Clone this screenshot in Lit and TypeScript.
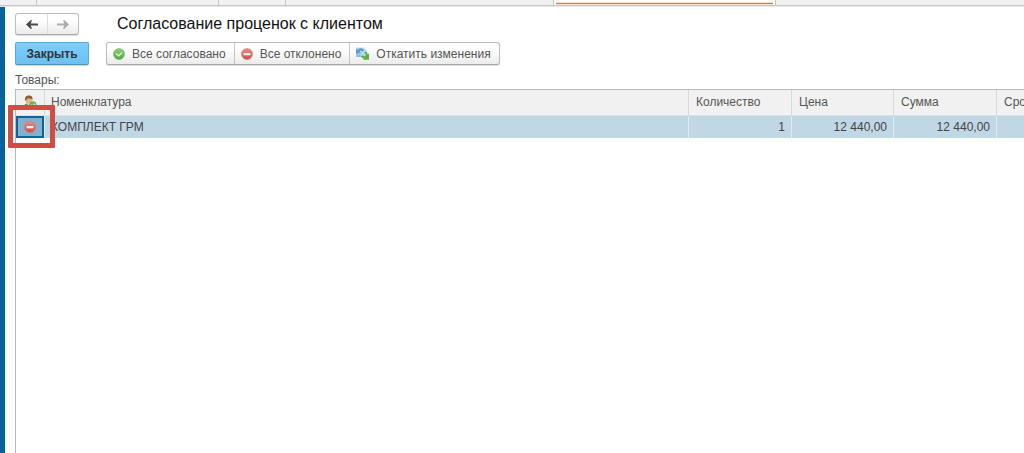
import { LitElement, html, css, svg } from "lit";
import { customElement, state } from "lit/decorators.js";

interface Item {
  name: string;
  quantity: string;
  price: string;
  sum: string;
  term: string;
}

const approvedIcon = html`<svg class="icon" width="12" height="12" viewBox="0 0 12 12" aria-hidden="true">
  <defs><linearGradient id="g" x1="0" y1="0" x2="0" y2="1"><stop offset="0" stop-color="#8fcf78" /><stop offset="1" stop-color="#55a843" /></linearGradient></defs>
  <circle cx="6" cy="6" r="5.5" fill="url(#g)" stroke="#6fb55c" stroke-width=".6" />
  <path d="M3 5.600 5.600 7.800 9 4.800" fill="none" stroke="#e4f5dd" stroke-width="1.3" />
</svg>`;

const rejectedIcon = html`<svg class="icon" width="12" height="12" viewBox="0 0 12 12" aria-hidden="true">
  <defs><linearGradient id="r" x1="0" y1="0" x2="0" y2="1"><stop offset="0" stop-color="#ea8b84" /><stop offset="1" stop-color="#d04a45" /></linearGradient></defs>
  <circle cx="6" cy="6" r="5.5" fill="url(#r)" stroke="#d9766f" stroke-width=".6" />
  <rect x="2.6" y="4.9" width="6.8" height="2.4" rx=".4" fill="#fff5f3" />
</svg>`;

const revertIcon = html`<svg class="icon" width="13" height="13" viewBox="0 0 13 13" aria-hidden="true">
  <path d="M0 .5h7.500l2.500 2.500V10H0z" fill="#b4d6ec" />
  <path d="M0 1.500 1.600 3C3.400.400 6.600.600 8 3.200L6.200 4.400C5.400 3.200 4.400 3.200 3.600 4.400L5 5.800 0 7z" fill="#5b9dce" />
  <path d="M.5 7.500h4V10h-4z" fill="#86bbdd" />
  <path d="M13 6.500v6.300H6.800L8.200 11.400C6.600 11.600 5.400 10.600 5 9.200L7 8.400C7.800 9.800 9.400 9.600 9.800 8.200 10 7.200 9.400 6.400 8.600 6L9.600 4.200C10.800 4.800 11.600 6 11.600 7.600z" fill="#5cb045" />
</svg>`;

const personIcon = html`<svg class="icon" width="14" height="14" viewBox="0 0 14 14" aria-hidden="true">
  <path d="M.5 12.500C.500 9.600 2.600 8.200 5.600 8.200s5 1.200 5 4.300z" fill="#5c9a62" />
  <path d="M4 8h3.200L5.600 10.800z" fill="#f2ead8" />
  <ellipse cx="5.800" cy="5.200" rx="3.100" ry="3.600" fill="#e8b383" />
  <path d="M2.200 5.600C1.400 1.800 3.400.400 5.800.400S10.200 1.800 9.400 5C8.600 3.400 7.400 3.600 6 3.200 4.200 3 3.600 3.800 3.400 5.600z" fill="#8d5a35" />
  <circle cx="10" cy="9.800" r="3.500" fill="#69b456" />
  <path d="m8.200 9.700 1.500 1.300 2.200-2.200" fill="none" stroke="#dff2d8" stroke-width="1.100" />
</svg>`;

const arrow = (back: boolean) => html`<svg width="12" height="9" viewBox="0 0 12 9" aria-hidden="true">
  ${back
    ? svg`<path d="M0 4.500 4.500.300H6L4.800 3.500H12v2H4.800L6 8.700H4.500z" fill="#4a4a4a" />`
    : svg`<path d="M12 4.500 7.500.300H6L7.200 3.500H0v2H7.200L6 8.700H7.500z" fill="#adadad" />`}
</svg>`;

@customElement("app-root")
export class AppRoot extends LitElement {
  @state() private items: Item[] = [
    { name: "КОМПЛЕКТ ГРМ", quantity: "1", price: "12 440,00", sum: "12 440,00", term: "" },
  ];

  static styles = css`
    :host {
      display: flex;
      flex-direction: column;
      height: 100vh;
      overflow: hidden;
      background: #fff;
      color: #444;
      font: 12px/16px "Liberation Sans", Arial, sans-serif;
    }
    * {
      box-sizing: border-box;
    }
    .tabs {
      display: flex;
      flex: none;
      height: 6px;
      background: #f1f1f1;
      border-bottom: 1px solid #c6c6c6;
      box-shadow: 0 1px #e8e8e8;
    }
    .tab {
      border-right: 1px solid #c4c4c4;
    }
    .home { width: 37px; }
    .wide { width: 182px; }
    .short { width: 67px; }
    .long { width: 268px; }
    .current {
      width: 222px;
      padding: 2px 2px 0;
      background: #fff;
    }
    .mark {
      height: 3px;
      border: 1px solid #f6e0cf;
      border-width: 1px 0;
      background: #dc7c34;
    }
    .window {
      display: flex;
      flex-direction: column;
      flex: 1;
      min-height: 0;
      margin-top: 1px;
      padding: 6px 0 0 10px;
      border-left: 5px solid #07629b;
    }
    .head {
      display: flex;
      align-items: center;
      gap: 38px;
    }
    h1 {
      margin: 0;
      color: #111;
      font-size: 16px;
      font-weight: 400;
      line-height: 22px;
    }
    button {
      display: flex;
      align-items: center;
      justify-content: center;
      margin: 0;
      padding: 0;
      border: 0;
      background: none;
      color: #555;
      font: inherit;
    }
    .group {
      display: flex;
      border: 1px solid #bcbcbc;
      border-bottom-color: #a6a6a6;
      border-radius: 3px;
      background: linear-gradient(#fff 30%, #ebebeb);
      box-shadow: 0 1px 1px #ddd;
    }
    .group button + button {
      border-left: 1px solid #c4c4c4;
    }
    .nav button {
      width: 31px;
      height: 20px;
    }
    .nav .forward {
      border-left-color: #ddd;
    }
    .commands {
      display: flex;
      gap: 17px;
      margin-top: 7px;
    }
    .close {
      width: 74px;
      height: 23px;
      border: 1px solid #5fa9d6;
      border-bottom-color: #5693b8;
      border-radius: 2px;
      background: linear-gradient(#7cceff, #6cc0f2);
      box-shadow: 0 1px 1px #ccc;
      color: #333;
      font-weight: 700;
    }
    .actions button {
      height: 21px;
      padding: 0 8px 0 6px;
      gap: 7px;
    }
    .icon {
      display: block;
      flex: none;
    }
    .label {
      margin: 7px 0 1px;
      color: #555;
    }
    .grid {
      position: relative;
      flex: 1;
      min-height: 0;
    }
    .scroll {
      height: 100%;
      overflow: hidden;
      border: 1px solid #b9b9b9;
      border-width: 1px 0 0 1px;
    }
    table {
      width: calc(100% + 76px);
      border-collapse: separate;
      border-spacing: 0;
      table-layout: fixed;
    }
    .status { width: 29px; }
    .number { width: 103px; }
    .number-narrow { width: 102px; }
    th {
      height: 26px;
      padding: 0 7px 2px;
      border-right: 1px solid #d9d9d9;
      border-bottom: 1px solid #e0e0e0;
      background: #f1f1f1;
      color: #555;
      font-weight: 400;
      text-align: left;
    }
    td {
      height: 22px;
      padding: 0 6px;
      border-right: 1px solid #dfeaf3;
      background: #c0d8e6;
      text-align: right;
    }
    .name {
      text-align: left;
    }
    th:nth-child(2) {
      padding-left: 6px;
    }
    th.state {
      padding: 0 7px 2px;
    }
    td.state {
      padding: 0;
    }
    .toggle {
      width: 28px;
      height: 22px;
      border: 2px solid #0865a0;
      background: #84b0cd;
    }
    .frame {
      position: absolute;
      left: -7px;
      top: 16px;
      width: 47px;
      height: 43px;
      border: 5px solid #d04d43;
      border-radius: 1px;
      pointer-events: none;
    }
  `;

  render() {
    return html`
      <div class="tabs">
        <div class="tab home"></div>
        <div class="tab wide"></div>
        <div class="tab short"></div>
        <div class="tab long"></div>
        <div class="tab current"><div class="mark"></div></div>
      </div>
      <main class="window">
        <header class="head">
          <nav class="group nav">
            <button aria-label="Назад">${arrow(true)}</button>
            <button class="forward" aria-label="Вперед">${arrow(false)}</button>
          </nav>
          <h1>Согласование проценок с клиентом</h1>
        </header>
        <div class="commands">
          <button class="close">Закрыть</button>
          <div class="group actions">
            <button>${approvedIcon}Все согласовано</button>
            <button>${rejectedIcon}Все отклонено</button>
            <button>${revertIcon}Откатить изменения</button>
          </div>
        </div>
        <div class="label" id="goods">Товары:</div>
        <div class="grid">
          <div class="scroll">
            <table aria-labelledby="goods">
              <colgroup>
                <col class="status" />
                <col />
                <col class="number" />
                <col class="number-narrow" />
                <col class="number" />
                <col class="number" />
              </colgroup>
              <thead>
                <tr>
                  <th class="state" aria-label="Согласовано">${personIcon}</th>
                  <th>Номенклатура</th>
                  <th>Количество</th>
                  <th>Цена</th>
                  <th>Сумма</th>
                  <th>Срок</th>
                </tr>
              </thead>
              <tbody>
                ${this.items.map(
                  (item) => html`<tr>
                    <td class="state"><button class="toggle" aria-label="Отклонено">${rejectedIcon}</button></td>
                    <td class="name">${item.name}</td>
                    <td>${item.quantity}</td>
                    <td>${item.price}</td>
                    <td>${item.sum}</td>
                    <td>${item.term}</td>
                  </tr>`
                )}
              </tbody>
            </table>
          </div>
          <div class="frame"></div>
        </div>
      </main>
    `;
  }
}
